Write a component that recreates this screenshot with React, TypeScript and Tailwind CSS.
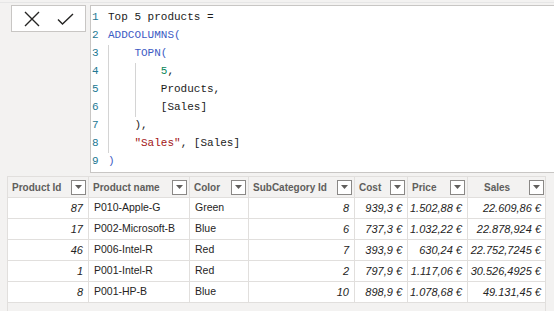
const code: { n: number; parts: { t: string; c?: string }[] }[] = [
  { n: 1, parts: [{ t: 'Top 5 products =' }] },
  { n: 2, parts: [{ t: 'ADDCOLUMNS(', c: 'text-[#3d5bc4]' }] },
  { n: 3, parts: [{ t: '    ' }, { t: 'TOPN(', c: 'text-[#3d5bc4]' }] },
  { n: 4, parts: [{ t: '        ' }, { t: '5', c: 'text-[#098658]' }, { t: ',' }] },
  { n: 5, parts: [{ t: '        Products,' }] },
  { n: 6, parts: [{ t: '        [Sales]' }] },
  { n: 7, parts: [{ t: '    ),' }] },
  { n: 8, parts: [{ t: '    ' }, { t: '"Sales"', c: 'text-[#a31515]' }, { t: ', [Sales]' }] },
  { n: 9, parts: [{ t: ')', c: 'text-[#3d5bc4]' }] },
];

const columns = [
  { name: 'Product Id', w: 'w-[81px]' },
  { name: 'Product name', w: 'w-[101px]' },
  { name: 'Color', w: 'w-[59px]' },
  { name: 'SubCategory Id', w: 'w-[106px]' },
  { name: 'Cost', w: 'w-[53px]' },
  { name: 'Price', w: 'w-[60px]' },
  { name: 'Sales', w: 'w-[78px]', pad: 'pl-[16px]' },
];

const rows = [
  ['87', 'P010-Apple-G', 'Green', '8', '939,3 €', '1.502,88 €', '22.609,86 €'],
  ['17', 'P002-Microsoft-B', 'Blue', '6', '737,3 €', '1.032,22 €', '22.878,924 €'],
  ['46', 'P006-Intel-R', 'Red', '7', '393,9 €', '630,24 €', '22.752,7245 €'],
  ['1', 'P001-Intel-R', 'Red', '2', '797,9 €', '1.117,06 €', '30.526,4925 €'],
  ['8', 'P001-HP-B', 'Blue', '10', '898,9 €', '1.078,68 €', '49.131,45 €'],
];

const textCols = [1, 2];

function DropIcon() {
  return (
    <span className="flex h-[15px] w-[15px] shrink-0 items-center justify-center border border-[#8a8886] bg-white">
      <svg width="7" height="4" viewBox="0 0 7 4">
        <path d="M0 0h7L3.5 4z" fill="#605e5c" />
      </svg>
    </span>
  );
}

export default function App() {
  return (
    <div className="h-[311px] w-[554px] overflow-hidden bg-[#f3f2f1] font-['Liberation_Sans',sans-serif]">
      <div className="h-[3px] border-b border-[#e6e6e6]" />
      <div className="flex h-[170px] gap-[4px] pl-[11px] pt-[2px]">
        <div className="flex h-[27px] w-[75px] items-center justify-center gap-[17px] border border-[#c8c6c4] bg-white">
          <svg width="16" height="16" viewBox="0 0 16 16">
            <path d="M1 1l14 14M15 1L1 15" stroke="#252423" strokeWidth="1.4" fill="none" />
          </svg>
          <svg width="17" height="12" viewBox="0 0 17 12">
            <path d="M1 6.5l4.5 4.5L16 1" stroke="#252423" strokeWidth="1.4" fill="none" />
          </svg>
        </div>
        <div className="relative flex-1 border-y border-l border-[#c8c6c4] bg-white pt-[2px] font-['Liberation_Mono',monospace] text-[11px] leading-[18px] text-[#1b1b1b]">
          <div className="absolute left-[17px] top-[39px] h-[108px] border-l border-[#d4d4d4]" />
          <div className="absolute left-[44px] top-[57px] h-[54px] border-l border-[#d4d4d4]" />
          {code.map((l) => (
            <div key={l.n} className="flex whitespace-pre">
              <span className="w-[17px] pl-[1px] text-[#237893]">{l.n}</span>
              <span>
                {l.parts.map((p, i) => (
                  <span key={i} className={p.c}>
                    {p.t}
                  </span>
                ))}
              </span>
            </div>
          ))}
        </div>
      </div>
      <div className="ml-[7px] mt-[3px] w-[539px] border-l border-r border-[#e1dfdd] text-[#252423]">
        <div className="flex h-[22px] border-t border-b border-[#e1dfdd] bg-[#f3f2f1]">
          {columns.map((c) => (
            <div
              key={c.name}
              className={`${c.w} flex shrink-0 items-center justify-between whitespace-nowrap border-r border-[#e1dfdd] pr-[2px] last:border-r-0 ${c.pad ?? 'pl-[4px]'}`}
            >
              <span className="text-[10px] font-bold text-[#605e5c]">{c.name}</span>
              <DropIcon />
            </div>
          ))}
        </div>
        {rows.map((r, ri) => (
          <div key={ri} className="flex h-[21px] border-b border-[#e1dfdd] bg-white">
            {r.map((v, ci) => (
              <div
                key={ci}
                className={`${columns[ci].w} flex shrink-0 items-center whitespace-nowrap border-r border-[#e1dfdd] last:border-r-0 ${
                  textCols.includes(ci) ? 'pl-[5px] text-[10.5px]' : 'justify-end pr-[5px] text-[11px] italic'
                }`}
              >
                {v}
              </div>
            ))}
          </div>
        ))}
        <div className="h-[20px]" />
      </div>
    </div>
  );
}
